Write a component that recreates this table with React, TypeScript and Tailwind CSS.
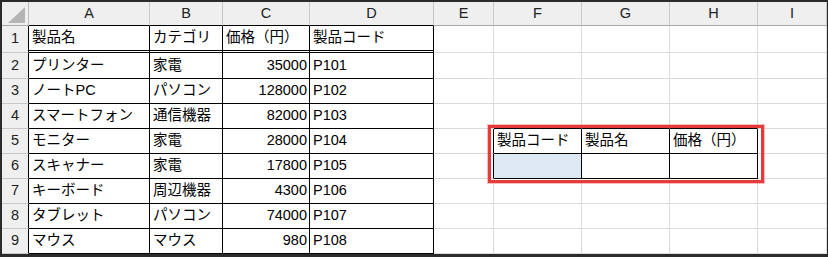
import React from "react";

const cols = ["A", "B", "C", "D", "E", "F", "G", "H", "I"];
const colWidths = ["w-[121px]", "w-[73px]", "w-[87px]", "w-[124px]", "w-[60px]", "w-[88px]", "w-[88px]", "w-[88px]", "w-[69px]"];
const rowHeights = ["h-[27px]", "h-[26px]", "h-[25px]", "h-[25px]", "h-[25px]", "h-[25px]", "h-[25px]", "h-[25px]", "h-[25px]"];

const products: [string, string, string, string][] = [
    ["製品名", "カテゴリ", "価格（円）", "製品コード"],
    ["プリンター", "家電", "35000", "P101"],
    ["ノートPC", "パソコン", "128000", "P102"],
    ["スマートフォン", "通信機器", "82000", "P103"],
    ["モニター", "家電", "28000", "P104"],
    ["スキャナー", "家電", "17800", "P105"],
    ["キーボード", "周辺機器", "4300", "P106"],
    ["タブレット", "パソコン", "74000", "P107"],
    ["マウス", "マウス", "980", "P108"],
];

// lookup area in F5:H6
const lookupHeaders = ["製品コード", "製品名", "価格（円）"];

function cellText(row: number, col: number): string {
    if (col < 4) return products[row][col];
    if (row === 4 && col >= 5 && col <= 7) return lookupHeaders[col - 5];
    return "";
}

function cellClass(row: number, col: number): string {
    const inTable = col < 4;
    const inLookup = col >= 5 && col <= 7 && (row === 4 || row === 5);
    // right edge
    let right = "border-r border-r-[#dadada]";
    if (inTable || inLookup || (col === 4 && (row === 4 || row === 5))) right = "border-r border-r-black";
    // bottom edge
    let bottom = "border-b border-b-[#dadada]";
    if (inTable) bottom = row === 0 ? "border-b-[3px] border-b-black border-double" : "border-b border-b-black";
    if (inLookup || (row === 3 && col >= 5 && col <= 7)) bottom = "border-b border-b-black";
    const fill = row === 5 && col === 5 ? "bg-[#dde8f3]" : "bg-white";
    const align = inTable && col === 2 && row > 0 ? "justify-end pr-[2px]" : "pl-[3px]";
    return `${right} ${bottom} ${fill} ${align}`;
}

export default function App() {
    return (
        <div className="w-[828px] h-[257px] bg-[#2b2b2b] pt-[2px] pl-[2px] font-['Liberation_Sans','Noto_Sans_CJK_JP',sans-serif] text-[14.5px] text-black">
            <div className="relative flex flex-col w-[825px]">
                {/* Column headers */}
                <div className="flex h-[24px] bg-[#efefef]">
                    <div className="w-[27px] border-r border-r-[#bcbcbc] border-b border-b-[#a8a8a8] flex items-end justify-end pr-[2px] pb-[2px]">
                        <svg width="18" height="16" viewBox="0 0 18 16">
                            <polygon points="17,0 17,16 0,16" fill="#b4b4b4" />
                        </svg>
                    </div>
                    {cols.map((c, i) => (
                        <div
                            key={c}
                            className={`${colWidths[i]} flex items-center justify-center border-r border-r-[#c8c8c8] border-b ${i < 4 ? "border-b-black" : "border-b-[#a8a8a8]"} text-[#222]`}
                        >
                            {c}
                        </div>
                    ))}
                </div>

                {/* Rows */}
                {rowHeights.map((h, r) => (
                    <div key={r} className={`flex ${h}`}>
                        <div className={`w-[27px] bg-[#efefef] border-r border-r-black border-b border-b-[#c8c8c8] flex items-center justify-center text-[#222]`}>
                            {r + 1}
                        </div>
                        {cols.map((c, col) => (
                            <div
                                key={c}
                                className={`${colWidths[col]} flex items-center whitespace-nowrap overflow-hidden ${cellClass(r, col)}`}
                            >
                                {cellText(r, col)}
                            </div>
                        ))}
                    </div>
                ))}

                {/* Highlight frame round the lookup area */}
                <div className="absolute left-[486px] top-[123px] w-[276px] h-[58px] border-[3px] border-[#e63b3b] shadow-[0_0_0_1px_rgba(240,110,110,0.45)] pointer-events-none" />
            </div>
        </div>
    );
}
